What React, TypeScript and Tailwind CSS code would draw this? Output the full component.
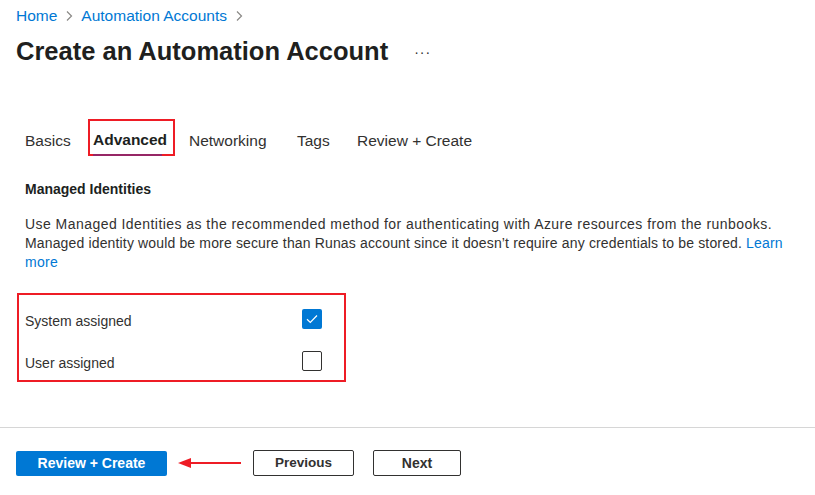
import React from "react";

const font = { fontFamily: '"Segoe UI", "Liberation Sans", Arial, sans-serif' };

function Chevron() {
  return (
    <svg width="8" height="12" viewBox="0 0 8 12" className="mx-[8px]">
      <path d="M2 1.5 L6.5 6 L2 10.5" fill="none" stroke="#8a8886" strokeWidth="1.2" />
    </svg>
  );
}

function Checkbox({ checked }: { checked: boolean }) {
  return checked ? (
    <div className="w-[20px] h-[20px] rounded-[2px] bg-[#0078d4] flex items-center justify-center">
      <svg width="12" height="10" viewBox="0 0 12 10">
        <path d="M1 5.2 L4.3 8.4 L11 1.5" fill="none" stroke="white" strokeWidth="1.2" />
      </svg>
    </div>
  ) : (
    <div className="w-[20px] h-[20px] rounded-[2px] border border-[#323130] bg-white" />
  );
}

export default function App() {
  return (
    <div className="w-[815px] h-[495px] bg-white text-[#323130] overflow-hidden" style={font}>
      <div className="pl-[16px] pt-[6px]">
        <div className="flex items-center h-[20px] text-[15.5px] text-[#0078d4]">
          <span>Home</span>
          <Chevron />
          <span>Automation Accounts</span>
          <Chevron />
        </div>
        <div className="flex items-center mt-[9px] h-[32px]">
          <h1 className="text-[25.5px] font-semibold text-[#201f1e]">Create an Automation Account</h1>
          <span className="ml-[26px] pt-[2px] text-[14px] text-[#323130] tracking-[1px]">···</span>
        </div>
      </div>

      <div className="flex items-center pl-[25px] mt-[52px] h-[37px] text-[15.5px] text-[#323130]">
        <span className="w-[63px] pt-[6px]">Basics</span>
        <div className="relative h-[37px] w-[87px] border-2 border-[#ee1c25] flex items-center pl-[3px] pt-[5px]">
          <span className="font-bold text-[#201f1e]">Advanced</span>
          <div className="absolute left-[3px] right-[11px] -bottom-[2px] h-[2px] bg-[#5c2d91] opacity-60" />
        </div>
        <span className="ml-[14px] w-[108px] pt-[6px]">Networking</span>
        <span className="w-[60px] pt-[6px]">Tags</span>
        <span className="pt-[6px]">Review + Create</span>
      </div>

      <div className="pl-[25px]">
        <div className="mt-[23px] text-[14px] font-bold text-[#201f1e]">Managed Identities</div>
        <div className="mt-[15px] text-[14px] leading-[19px] text-[#323130] whitespace-nowrap">
          <div className="tracking-[0.45px]">
            Use Managed Identities as the recommended method for authenticating with Azure resources from the runbooks.
          </div>
          <div className="tracking-[0.15px]">
            Managed identity would be more secure than Runas account since it doesn’t require any credentials to be stored.{" "}
            <span className="text-[#0078d4]">Learn</span>
          </div>
          <div className="text-[#0078d4] tracking-[0.3px]">more</div>
        </div>
      </div>

      <div className="ml-[17px] mt-[21px] w-[329px] h-[89px] border-2 border-[#ee1c25] pl-[6px] pr-[22px] pt-[5px] flex flex-col justify-center gap-[22px] text-[14px]">
        <div className="flex items-center justify-between h-[20px]">
          <span className="pt-[4px]">System assigned</span>
          <Checkbox checked />
        </div>
        <div className="flex items-center justify-between h-[20px]">
          <span className="pt-[4px]">User assigned</span>
          <Checkbox checked={false} />
        </div>
      </div>

      <div className="mt-[45px] h-px bg-[#d6d6d6]" />

      <div className="flex items-center pl-[16px] mt-[22px]">
        <button className="w-[151px] h-[25px] rounded-[2px] bg-[#0078d4] text-white text-[14px] font-semibold">
          Review + Create
        </button>
        <svg width="64" height="12" viewBox="0 0 64 12" className="ml-[11px]">
          <path d="M12 6 H63" stroke="#ee1c25" strokeWidth="2" />
          <path d="M0 6 L13 1 L13 11 Z" fill="#ee1c25" />
        </svg>
        <button className="ml-[11px] w-[101px] h-[26px] rounded-[2px] border border-[#323130] bg-white text-[13.5px] font-semibold text-[#323130]">
          Previous
        </button>
        <button className="ml-[19px] w-[88px] h-[26px] rounded-[2px] border border-[#323130] bg-white text-[14px] font-semibold text-[#323130]">
          Next
        </button>
      </div>
    </div>
  );
}
